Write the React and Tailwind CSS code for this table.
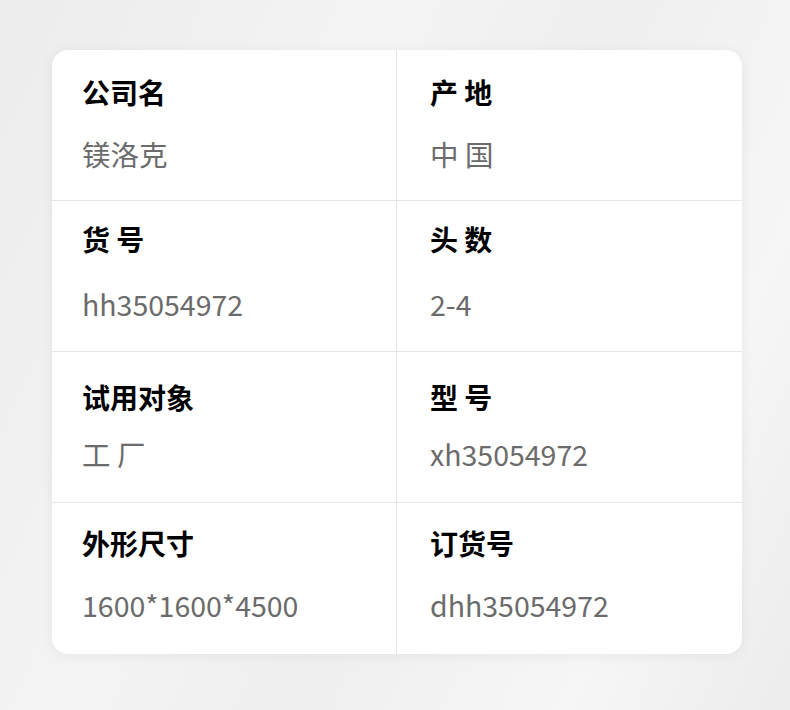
const rows = [
  { pad: 'pt-[26px]', gap: 'mt-[30px]', h: 'h-[151px]', cells: [['公司名', '镁洛克'], ['产 地', '中 国']] },
  { pad: 'pt-[22px]', gap: 'mt-[33px]', h: 'h-[151px]', cells: [['货 号', 'hh35054972'], ['头 数', '2-4']] },
  { pad: 'pt-[29px]', gap: 'mt-[25px]', h: 'h-[151px]', cells: [['试用对象', '工 厂'], ['型 号', 'xh35054972']] },
  { pad: 'pt-[24px]', gap: 'mt-[30px]', h: 'h-[151px]', cells: [['外形尺寸', '1600*1600*4500'], ['订货号', 'dhh35054972']] },
];

function Cell({ label, value, row, right, last }) {
  return (
    <div
      className={`${row.h} ${row.pad} ${right ? 'pl-[33px]' : 'pl-[30px] border-r border-[#e6e6e6]'} ${last ? '' : 'border-b border-[#e6e6e6]'}`}
    >
      <p className="text-[28px] leading-[32px] font-bold text-black whitespace-pre">{label}</p>
      <p className={`${row.gap} text-[28.5px] leading-[32px] text-[#6b6b6b] whitespace-pre`}>{value}</p>
    </div>
  );
}

export default function App() {
  return (
    <div
      className="w-[790px] h-[710px] pt-[50px] pl-[52px] bg-[linear-gradient(115deg,#ececec_0%,#f4f4f4_35%,#efefef_55%,#f6f6f6_80%,#ececec_100%)]"
      style={{ fontFamily: '"Noto Sans CJK SC", "Noto Sans", sans-serif' }}
    >
      <div className="w-[690px] grid grid-cols-2 bg-white rounded-[16px] shadow-[0_2px_14px_rgba(0,0,0,0.06)] overflow-hidden">
        {rows.map((row, r) =>
          row.cells.map(([label, value], c) => (
            <Cell key={`${r}-${c}`} label={label} value={value} row={row} right={c === 1} last={r === rows.length - 1} />
          ))
        )}
      </div>
    </div>
  );
}
